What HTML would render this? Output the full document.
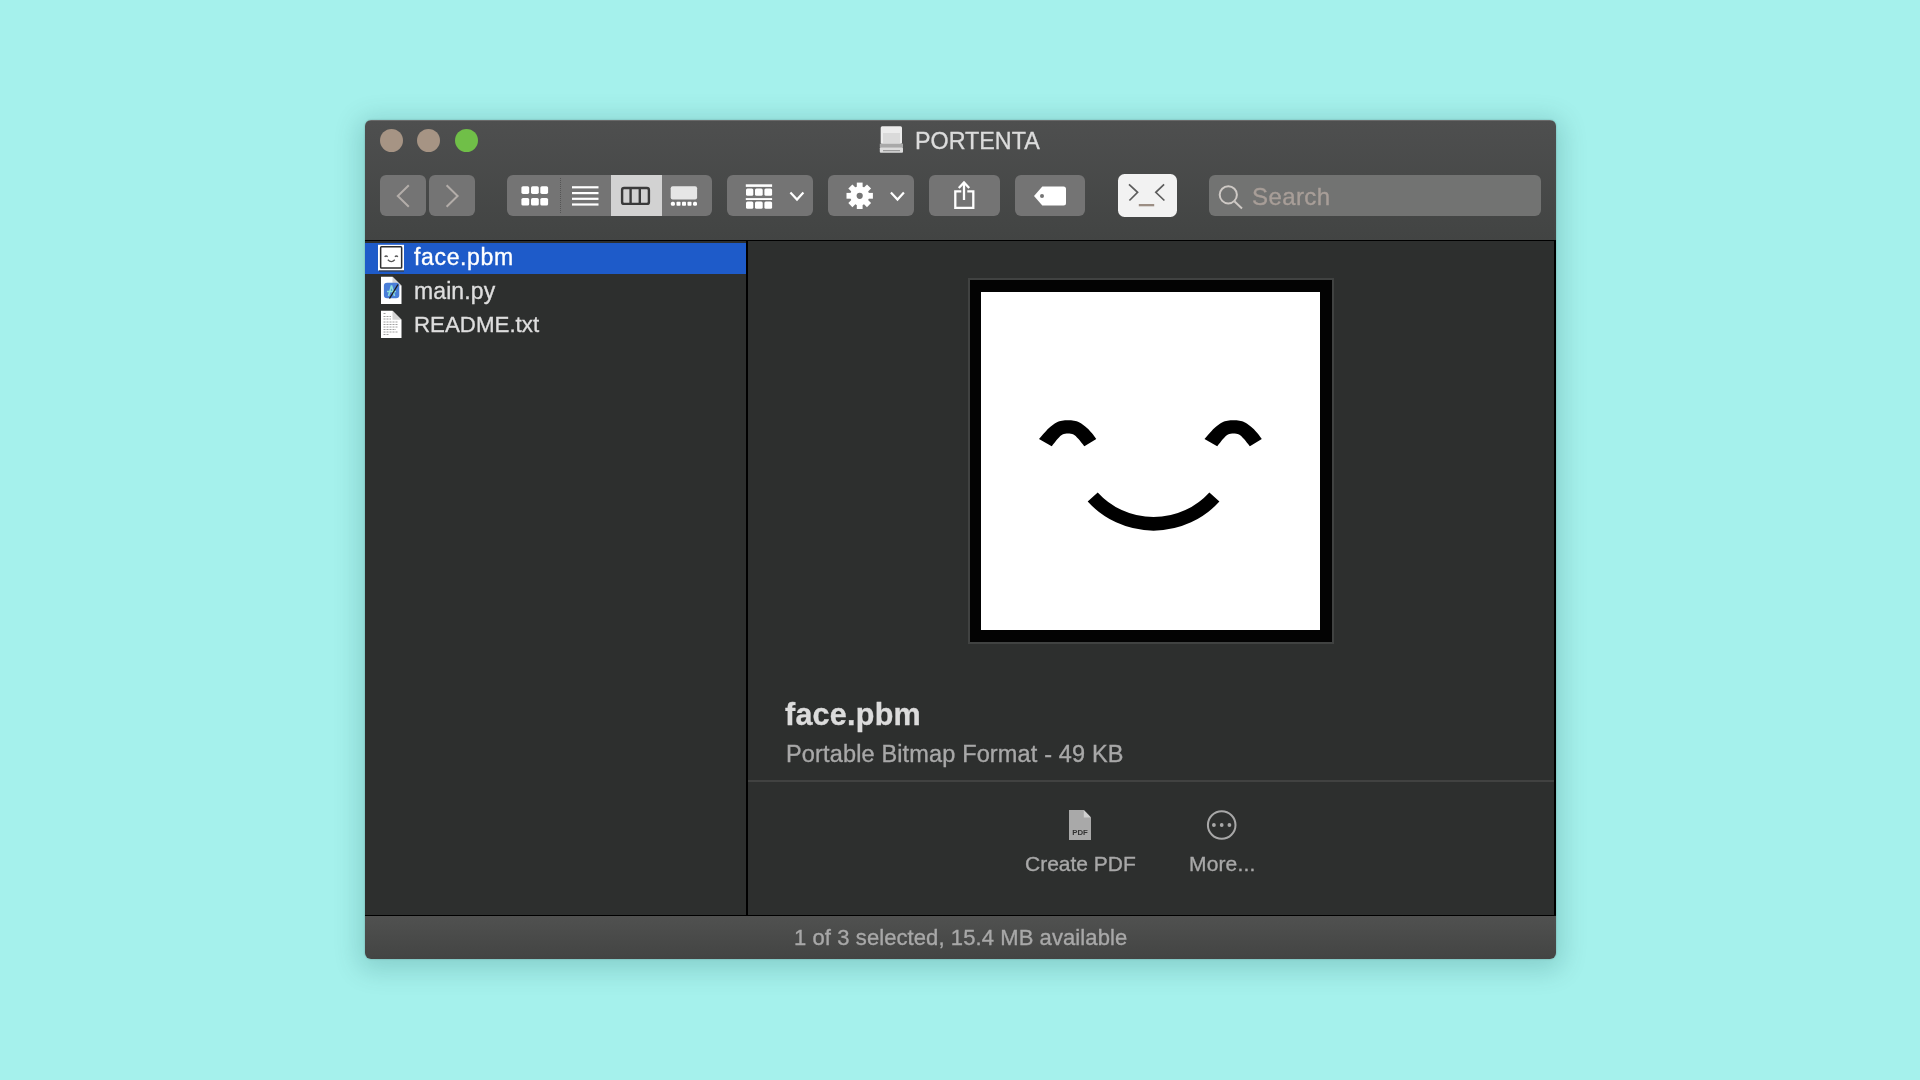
<!DOCTYPE html>
<html><head><meta charset="utf-8">
<style>
html,body{margin:0;padding:0;}
body{width:1920px;height:1080px;position:relative;overflow:hidden;background:#A5F1EC;font-family:"Liberation Sans",sans-serif;}
.a{position:absolute;}
.t{position:absolute;white-space:nowrap;line-height:1;will-change:transform;-webkit-text-stroke:0.35px currentColor;}
#win{left:365px;top:120px;width:1191px;height:839px;border-radius:6px;overflow:hidden;box-shadow:0 5px 26px 6px rgba(0,70,70,0.19),0 0 2px rgba(0,0,0,0.25);}
#tb{left:0;top:0;width:1191px;height:120px;background:linear-gradient(#4E4F4F,#424443);border-top:1px solid #6a6a6a;box-sizing:border-box;}
#blk1{left:0;top:120px;width:1191px;height:1px;background:#000;}
#content{left:0;top:121px;width:1191px;height:674px;background:#2D2F2E;}
#blk2{left:0;top:795px;width:1191px;height:1px;background:#000;}
#status{left:0;top:796px;width:1191px;height:43px;background:linear-gradient(#505150,#434443);}
.btn{position:absolute;top:175px;height:41px;background:#747474;border-radius:6px;}
.light{position:absolute;top:128.5px;width:23px;height:23px;border-radius:50%;}
</style></head><body>
<div id="win" class="a">
  <div id="tb" class="a"></div>
  <div id="blk1" class="a"></div>
  <div id="content" class="a"></div>
  <div id="blk2" class="a"></div>
  <div id="status" class="a"></div>
</div>

<!-- traffic lights -->
<div class="light" style="left:379.5px;background:#A69484;"></div>
<div class="light" style="left:417px;background:#A69484;"></div>
<div class="light" style="left:454.5px;background:#70BF48;"></div>

<!-- title -->
<div class="t" style="left:914.5px;top:129.7px;font-size:23.3px;color:#DCDCDC;">PORTENTA</div>

<!-- toolbar buttons -->
<div class="btn" style="left:380px;width:46px;"></div>
<div class="btn" style="left:429px;width:46px;"></div>
<div class="btn" style="left:507px;width:205px;"></div>
<div class="a" style="left:611px;top:175px;width:51px;height:41px;background:#D2D2D2;"></div>
<div class="btn" style="left:727px;width:86px;"></div>
<div class="btn" style="left:828px;width:86px;"></div>
<div class="btn" style="left:929px;width:71px;"></div>
<div class="btn" style="left:1015px;width:70px;"></div>
<div class="a" style="left:1118px;top:174px;width:59px;height:43px;background:#F2F2F2;border-radius:6.5px;"></div>
<div class="btn" style="left:1209px;width:332px;background:#727372;"></div>
<div class="t" style="left:1252px;top:184.5px;font-size:24px;letter-spacing:0.4px;color:#A89E98;">Search</div>

<!-- sidebar -->
<div class="a" style="left:365px;top:243px;width:381px;height:31px;background:#1E5BC9;"></div>
<div class="a" style="left:746px;top:241px;width:2px;height:674px;background:#000;"></div>
<div class="a" style="left:1554px;top:241px;width:2px;height:674px;background:#000;"></div>
<div class="t" style="left:414px;top:246px;font-size:23px;letter-spacing:0.65px;color:#FFFFFF;">face.pbm</div>
<div class="t" style="left:413.5px;top:280px;font-size:23px;letter-spacing:0.1px;color:#DEDEDE;">main.py</div>
<div class="t" style="left:413.5px;top:313.5px;font-size:22.3px;color:#DEDEDE;">README.txt</div>

<!-- preview image -->
<div class="a" style="left:968px;top:278px;width:366px;height:366px;background:#404241;"></div>
<div class="a" style="left:970px;top:280px;width:362px;height:362px;background:#030303;"></div>
<div class="a" style="left:981px;top:292px;width:339px;height:338px;background:#FFFFFF;"></div>

<div class="t" style="left:785px;top:698.5px;font-size:30.5px;letter-spacing:0.25px;font-weight:bold;color:#DCDCDC;">face.pbm</div>
<div class="t" style="left:785.5px;top:743.3px;font-size:23.5px;letter-spacing:0.15px;color:#A8A8A8;">Portable Bitmap Format - 49 KB</div>
<div class="a" style="left:748px;top:780px;width:806px;height:2px;background:#414241;"></div>

<div class="t" style="left:1024.5px;top:853.2px;font-size:21px;color:#A8A8A8;">Create PDF</div>
<div class="t" style="left:1188.5px;top:853.2px;letter-spacing:0.15px;font-size:21px;color:#A8A8A8;">More...</div>

<div class="t" style="left:794px;top:927px;font-size:22px;letter-spacing:0.09px;color:#A8A8A8;">1 of 3 selected, 15.4 MB available</div>

<svg class="a" style="left:0;top:0;" width="1920" height="1080" viewBox="0 0 1920 1080">
<!-- nav chevrons -->
<g fill="none" stroke="#B3ADA9" stroke-width="2" stroke-linecap="butt" stroke-linejoin="miter">
<path d="M408.8,185.2 L397.8,196 L408.8,206.8"/>
<path d="M446.6,185.2 L457.6,196 L446.6,206.8"/>
</g>
<!-- segment divider -->
<line x1="560.5" y1="178" x2="560.5" y2="213" stroke="#555" stroke-width="1" stroke-dasharray="1 1"/>
<!-- icon view -->
<g fill="#FFF">
<rect x="521.4" y="186.2" width="7.8" height="7.7" rx="1.6"/>
<rect x="531" y="186.2" width="7.8" height="7.7" rx="1.6"/>
<rect x="540.3" y="186.2" width="7.8" height="7.7" rx="1.6"/>
<rect x="521.4" y="197.9" width="7.8" height="7.7" rx="1.6"/>
<rect x="531" y="197.9" width="7.8" height="7.7" rx="1.6"/>
<rect x="540.3" y="197.9" width="7.8" height="7.7" rx="1.6"/>
</g>
<!-- list view -->
<g fill="#FFF">
<rect x="572" y="186.2" width="26.5" height="2.2"/>
<rect x="572" y="192" width="26.5" height="2.2"/>
<rect x="572" y="197.7" width="26.5" height="2.2"/>
<rect x="572" y="203.4" width="26.5" height="2.2"/>
</g>
<!-- column view -->
<g fill="none" stroke="#3A3A3A" stroke-width="2.4">
<rect x="622.1" y="188" width="26.8" height="15.9" rx="2"/>
<line x1="630.6" y1="188" x2="630.6" y2="204"/>
<line x1="639.8" y1="188" x2="639.8" y2="204"/>
</g>
<!-- gallery view -->
<rect x="670.7" y="186.2" width="26.4" height="13.2" rx="2" fill="#E6E6E6"/>
<g fill="#FFF">
<rect x="670.9" y="201.7" width="4" height="4" rx="1.5"/>
<rect x="676.5" y="201.7" width="4" height="4" rx="0.8"/>
<rect x="682" y="201.7" width="4" height="4" rx="0.8"/>
<rect x="687.5" y="201.7" width="4" height="4" rx="0.8"/>
<rect x="693" y="201.7" width="4" height="4" rx="1.5"/>
</g>
<!-- group icon -->
<g fill="#FFF">
<rect x="745.8" y="184.3" width="26.3" height="2.6"/>
<rect x="746" y="188.4" width="7.3" height="7.3" rx="1.5"/>
<rect x="755" y="188.4" width="7.7" height="7.3" rx="1.5"/>
<rect x="764.4" y="188.4" width="7.7" height="7.3" rx="1.5"/>
<rect x="745.8" y="198.1" width="26.3" height="1.9"/>
<rect x="746" y="201.5" width="7.3" height="7.3" rx="1.5"/>
<rect x="755" y="201.5" width="7.7" height="7.3" rx="1.5"/>
<rect x="764.4" y="201.5" width="7.7" height="7.3" rx="1.5"/>
</g>
<g fill="none" stroke="#FFF" stroke-width="2.2">
<path d="M790.4,192.6 L797,199.6 L803.4,192.6"/>
<path d="M890.9,192.6 L897.5,199.6 L903.9,192.6"/>
</g>
<!-- gear -->
<g fill="#FFF" transform="translate(859.7,195.8)">
<circle r="9.6"/>
<rect x="-2.9" y="-13.2" width="5.8" height="26.4"/>
<rect x="-2.9" y="-13.2" width="5.8" height="26.4" transform="rotate(45)"/>
<rect x="-2.9" y="-13.2" width="5.8" height="26.4" transform="rotate(90)"/>
<rect x="-2.9" y="-13.2" width="5.8" height="26.4" transform="rotate(135)"/>
<circle r="3.1" fill="#747474"/>
</g>
<!-- share -->
<g fill="none" stroke="#FFF" stroke-width="2.3">
<path d="M961.3,191.4 L955.3,191.4 L955.3,207.8 L973.3,207.8 L973.3,191.4 L967.3,191.4"/>
<path d="M964,182.5 L964,200"/>
<path d="M958.8,188 L964,182.5 L969.2,188"/>
</g>
<!-- tag -->
<path d="M1034,196 L1042.3,186.5 L1063.5,186.5 Q1066,186.5 1066,189 L1066,203 Q1066,205.5 1063.5,205.5 L1042.3,205.5 Z" fill="#FFF"/>
<circle cx="1042" cy="196" r="2" fill="#747474"/>
<!-- custom >_< -->
<g fill="none" stroke="#5C5C5C" stroke-width="1.7">
<path d="M1129,184.3 L1137.6,192.3 L1129.4,200.5"/>
<path d="M1164.1,184.3 L1155.8,192.3 L1164.4,200.5"/>
</g>
<rect x="1138.8" y="204" width="15.4" height="2.3" fill="#9C8E84"/>
<!-- search glass -->
<g fill="none" stroke="#CEC9C5" stroke-width="2">
<circle cx="1228.3" cy="194.8" r="8.6"/>
<path d="M1234.6,201.6 L1242,208.6"/>
</g>

<!-- drive icon -->
<rect x="880.7" y="126.3" width="21.3" height="17.6" rx="1.5" fill="#ECECEC"/>
<rect x="883" y="133" width="17" height="10" fill="#DADADA"/>
<rect x="879.8" y="143.6" width="23.2" height="3.8" fill="#A9A9A9"/>
<rect x="879.8" y="147.3" width="23.2" height="5.4" rx="1" fill="#DCDCDC"/>
<rect x="883" y="150.2" width="17" height="1" fill="#8C8C8C"/>
<!-- sidebar face icon -->
<rect x="378" y="244.8" width="26" height="25.8" fill="#FFF"/>
<rect x="379" y="270.4" width="25" height="1.2" fill="#3A3A3A"/>
<rect x="380.65" y="246.85" width="21" height="21.1" rx="0.8" fill="none" stroke="#2E2E2E" stroke-width="1.5"/>
<g fill="none" stroke="#555" stroke-width="1.3">
<path d="M384.6,256.8 Q386.1,255.3 387.7,256.8"/>
<path d="M394.9,256.8 Q396.4,255.3 397.9,256.8"/>
<path d="M387.8,259.8 Q391.3,263.4 394.8,259.8" stroke-width="1.3"/>
</g>
<!-- main.py icon -->
<path d="M381,276.8 L392.5,276.8 L401.5,285.8 L401.5,303.9 L381,303.9 Z" fill="#FFF"/>
<path d="M392.5,276.8 L392.5,285.8 L401.5,285.8 Z" fill="#D4D4D4"/>
<rect x="383.9" y="282.8" width="15.4" height="15.4" rx="3.2" fill="#4A7ED8"/>
<path d="M387,291.5 L396,291.5 M391.5,285.5 L388.5,296 M391.5,285.5 L394.5,296" stroke="#8FE0DA" stroke-width="1.5" fill="none"/>
<path d="M398,284.5 L389.5,298.5" stroke="#1E1E1E" stroke-width="1.4"/>
<!-- README icon -->
<path d="M381,310.8 L392.5,310.8 L401.5,319.8 L401.5,337.9 L381,337.9 Z" fill="#FFF"/>
<path d="M392.5,310.8 L392.5,319.8 L401.5,319.8 Z" fill="#D4D4D4"/>
<g stroke="#A0A0A0" stroke-width="1" stroke-dasharray="2 1">
<path d="M383.5,313.5 H386 M383.5,316.5 H391 M383.5,319 H391 M383.5,322 H398 M383.5,324.5 H398 M383.5,327 H398 M383.5,329.5 H396 M383.5,332 H398 M383.5,334.5 H389"/>
</g>
<!-- more -->
<circle cx="1221.7" cy="825" r="13.8" fill="none" stroke="#A8A8A8" stroke-width="2"/>
<g fill="#A8A8A8">
<circle cx="1213.9" cy="825" r="1.9"/>
<circle cx="1221.7" cy="825" r="1.9"/>
<circle cx="1229.4" cy="825" r="1.9"/>
</g>
<!-- pdf -->
<path d="M1069,810 L1083.8,810 L1091,817.6 L1091,840 L1069,840 Z" fill="#A9A9A9"/>
<path d="M1083.8,810 L1083.8,817.6 L1091,817.6 Z" fill="#D0D0D0"/>
<text x="1080" y="834.6" font-size="7.8" font-weight="bold" text-anchor="middle" fill="#333" font-family="Liberation Sans">PDF</text>
<!-- face -->
<path d="M1039.00,439.00 C1039.83,438.05 1042.33,435.13 1044.00,433.30 C1045.67,431.47 1046.92,429.78 1049.00,428.00 C1051.08,426.22 1054.33,423.80 1056.50,422.60 C1058.67,421.40 1060.08,421.18 1062.00,420.80 C1063.92,420.42 1066.00,420.30 1068.00,420.30 C1070.00,420.30 1072.08,420.42 1074.00,420.80 C1075.92,421.18 1077.33,421.40 1079.50,422.60 C1081.67,423.80 1084.92,426.22 1087.00,428.00 C1089.08,429.78 1090.45,431.47 1092.00,433.30 C1093.55,435.13 1095.58,438.05 1096.30,439.00 L1084.40,446.30 C1083.33,445.00 1079.82,440.47 1078.00,438.50 C1076.18,436.53 1075.17,435.32 1073.50,434.50 C1071.83,433.68 1069.83,433.60 1068.00,433.60 C1066.17,433.60 1064.17,433.68 1062.50,434.50 C1060.83,435.32 1059.80,436.53 1058.00,438.50 C1056.20,440.47 1052.75,445.00 1051.70,446.30 Z" fill="#000"/>
<path d="M1039.00,439.00 C1039.83,438.05 1042.33,435.13 1044.00,433.30 C1045.67,431.47 1046.92,429.78 1049.00,428.00 C1051.08,426.22 1054.33,423.80 1056.50,422.60 C1058.67,421.40 1060.08,421.18 1062.00,420.80 C1063.92,420.42 1066.00,420.30 1068.00,420.30 C1070.00,420.30 1072.08,420.42 1074.00,420.80 C1075.92,421.18 1077.33,421.40 1079.50,422.60 C1081.67,423.80 1084.92,426.22 1087.00,428.00 C1089.08,429.78 1090.45,431.47 1092.00,433.30 C1093.55,435.13 1095.58,438.05 1096.30,439.00 L1084.40,446.30 C1083.33,445.00 1079.82,440.47 1078.00,438.50 C1076.18,436.53 1075.17,435.32 1073.50,434.50 C1071.83,433.68 1069.83,433.60 1068.00,433.60 C1066.17,433.60 1064.17,433.68 1062.50,434.50 C1060.83,435.32 1059.80,436.53 1058.00,438.50 C1056.20,440.47 1052.75,445.00 1051.70,446.30 Z" fill="#000" transform="translate(165.5,0)"/>
<path d="M1092.7,497 A82.4,82.4 0 0 0 1214.4,497" fill="none" stroke="#000" stroke-width="13.6"/>
</svg>
</body></html>
